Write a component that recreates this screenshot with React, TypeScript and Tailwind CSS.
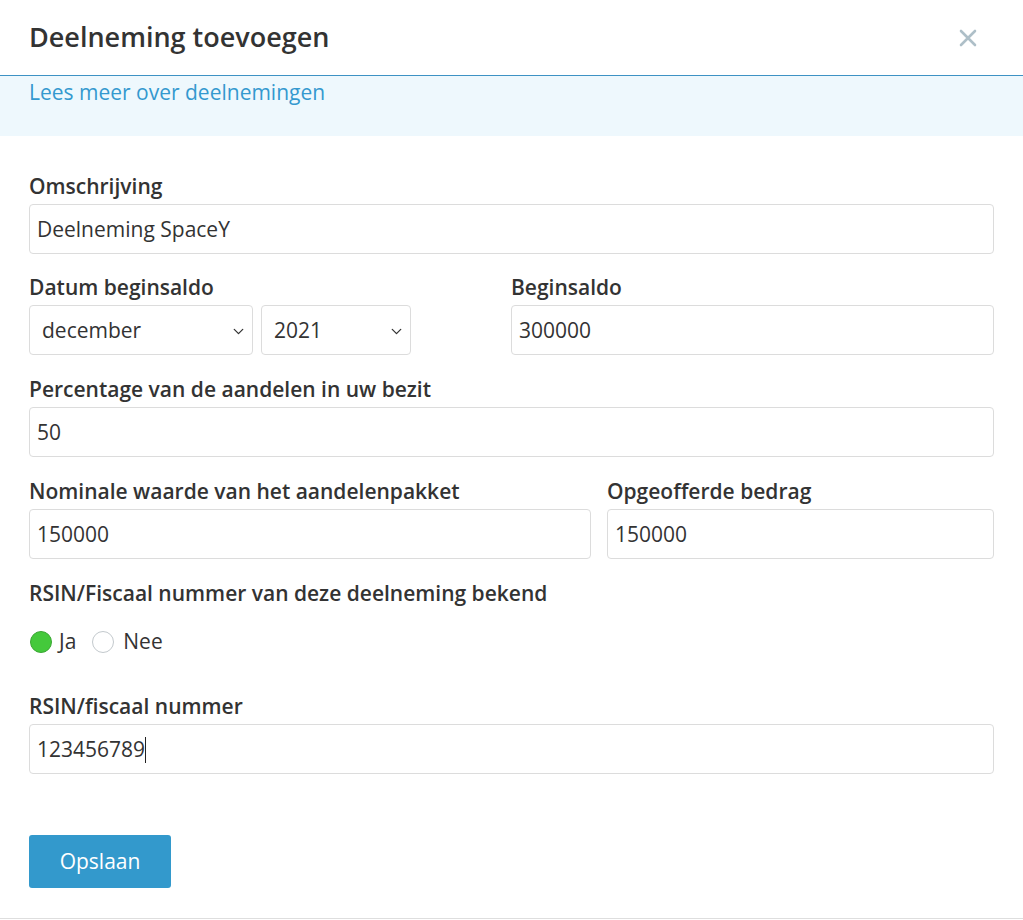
import { ChevronDown } from 'lucide-react';

const font = { fontFamily: '"Open Sans", "Liberation Sans", sans-serif' };

function Label({ children }: { children: React.ReactNode }) {
  return <div className="text-[21px] leading-[28px] font-semibold text-[#333] mb-[4px]">{children}</div>;
}

function Field({ value, caret = false, className = '' }: { value: string; caret?: boolean; className?: string }) {
  return (
    <div className={`h-[50px] border border-[#dcdcdc] rounded-[4px] bg-white px-[7px] pt-[2px] flex items-center text-[21px] text-[#333] ${className}`}>
      <span>{value}</span>
      {caret && <span className="inline-block w-px h-[26px] bg-[#222]" />}
    </div>
  );
}

function Select({ value, className = '' }: { value: string; className?: string }) {
  return (
    <div className={`h-[50px] border border-[#dcdcdc] rounded-[4px] bg-white pl-[12px] pr-[5px] pt-[2px] flex items-center justify-between text-[21px] text-[#333] ${className}`}>
      <span>{value}</span>
      <ChevronDown className="w-[17px] h-[17px] text-[#333]" strokeWidth={1.8} />
    </div>
  );
}

export default function App() {
  return (
    <div className="w-[1023px] h-[920px] bg-white" style={font}>
      <div className="h-[76px] border-b border-[#3d92c4] flex items-center justify-between pl-[29px] pr-[46px]">
        <h2 className="text-[27px] font-semibold text-[#333]">Deelneming toevoegen</h2>
        <svg width="18" height="18" viewBox="0 0 18 18">
          <path d="M2 2 L16 16 M16 2 L2 16" stroke="#aebfc8" strokeWidth="2.6" strokeLinecap="round" />
        </svg>
      </div>

      <div className="h-[60px] bg-[#eef8fd] pl-[29px] pt-[2px]">
        <a className="text-[21px] leading-[28px] text-[#3499cf]">Lees meer over deelnemingen</a>
      </div>

      <div className="px-[29px] pt-[36px] pb-[30px] border-b border-[#dedede]">
        <Label>Omschrijving</Label>
        <Field value="Deelneming SpaceY" />

        <div className="flex mt-[19px]">
          <div className="w-[482px]">
            <Label>Datum beginsaldo</Label>
            <div className="flex gap-[8px]">
              <Select value="december" className="w-[224px]" />
              <Select value="2021" className="w-[150px]" />
            </div>
          </div>
          <div className="flex-1">
            <Label>Beginsaldo</Label>
            <Field value="300000" />
          </div>
        </div>

        <div className="mt-[20px]">
          <Label>Percentage van de aandelen in uw bezit</Label>
          <Field value="50" />
        </div>

        <div className="flex gap-[16px] mt-[20px]">
          <div className="w-[562px]">
            <Label>Nominale waarde van het aandelenpakket</Label>
            <Field value="150000" />
          </div>
          <div className="flex-1">
            <Label>Opgeofferde bedrag</Label>
            <Field value="150000" />
          </div>
        </div>

        <div className="mt-[20px]">
          <Label>RSIN/Fiscaal nummer van deze deelneming bekend</Label>
          <div className="flex items-center mt-[21px] h-[28px] text-[21px] text-[#333]">
            <span className="w-[22px] h-[22px] rounded-full bg-[#44c93b] border border-[#3aa733] ml-[1px]" />
            <span className="ml-[7px]">Ja</span>
            <span className="w-[22px] h-[22px] rounded-full bg-white border border-[#c3c9cd] ml-[16px]" />
            <span className="ml-[9px]">Nee</span>
          </div>
        </div>

        <div className="mt-[36px]">
          <Label>RSIN/fiscaal nummer</Label>
          <Field value="123456789" caret />
        </div>

        <button className="mt-[61px] w-[142px] h-[53px] rounded-[3px] bg-[#3399cc] text-white text-[21px]">
          Opslaan
        </button>
      </div>
    </div>
  );
}
